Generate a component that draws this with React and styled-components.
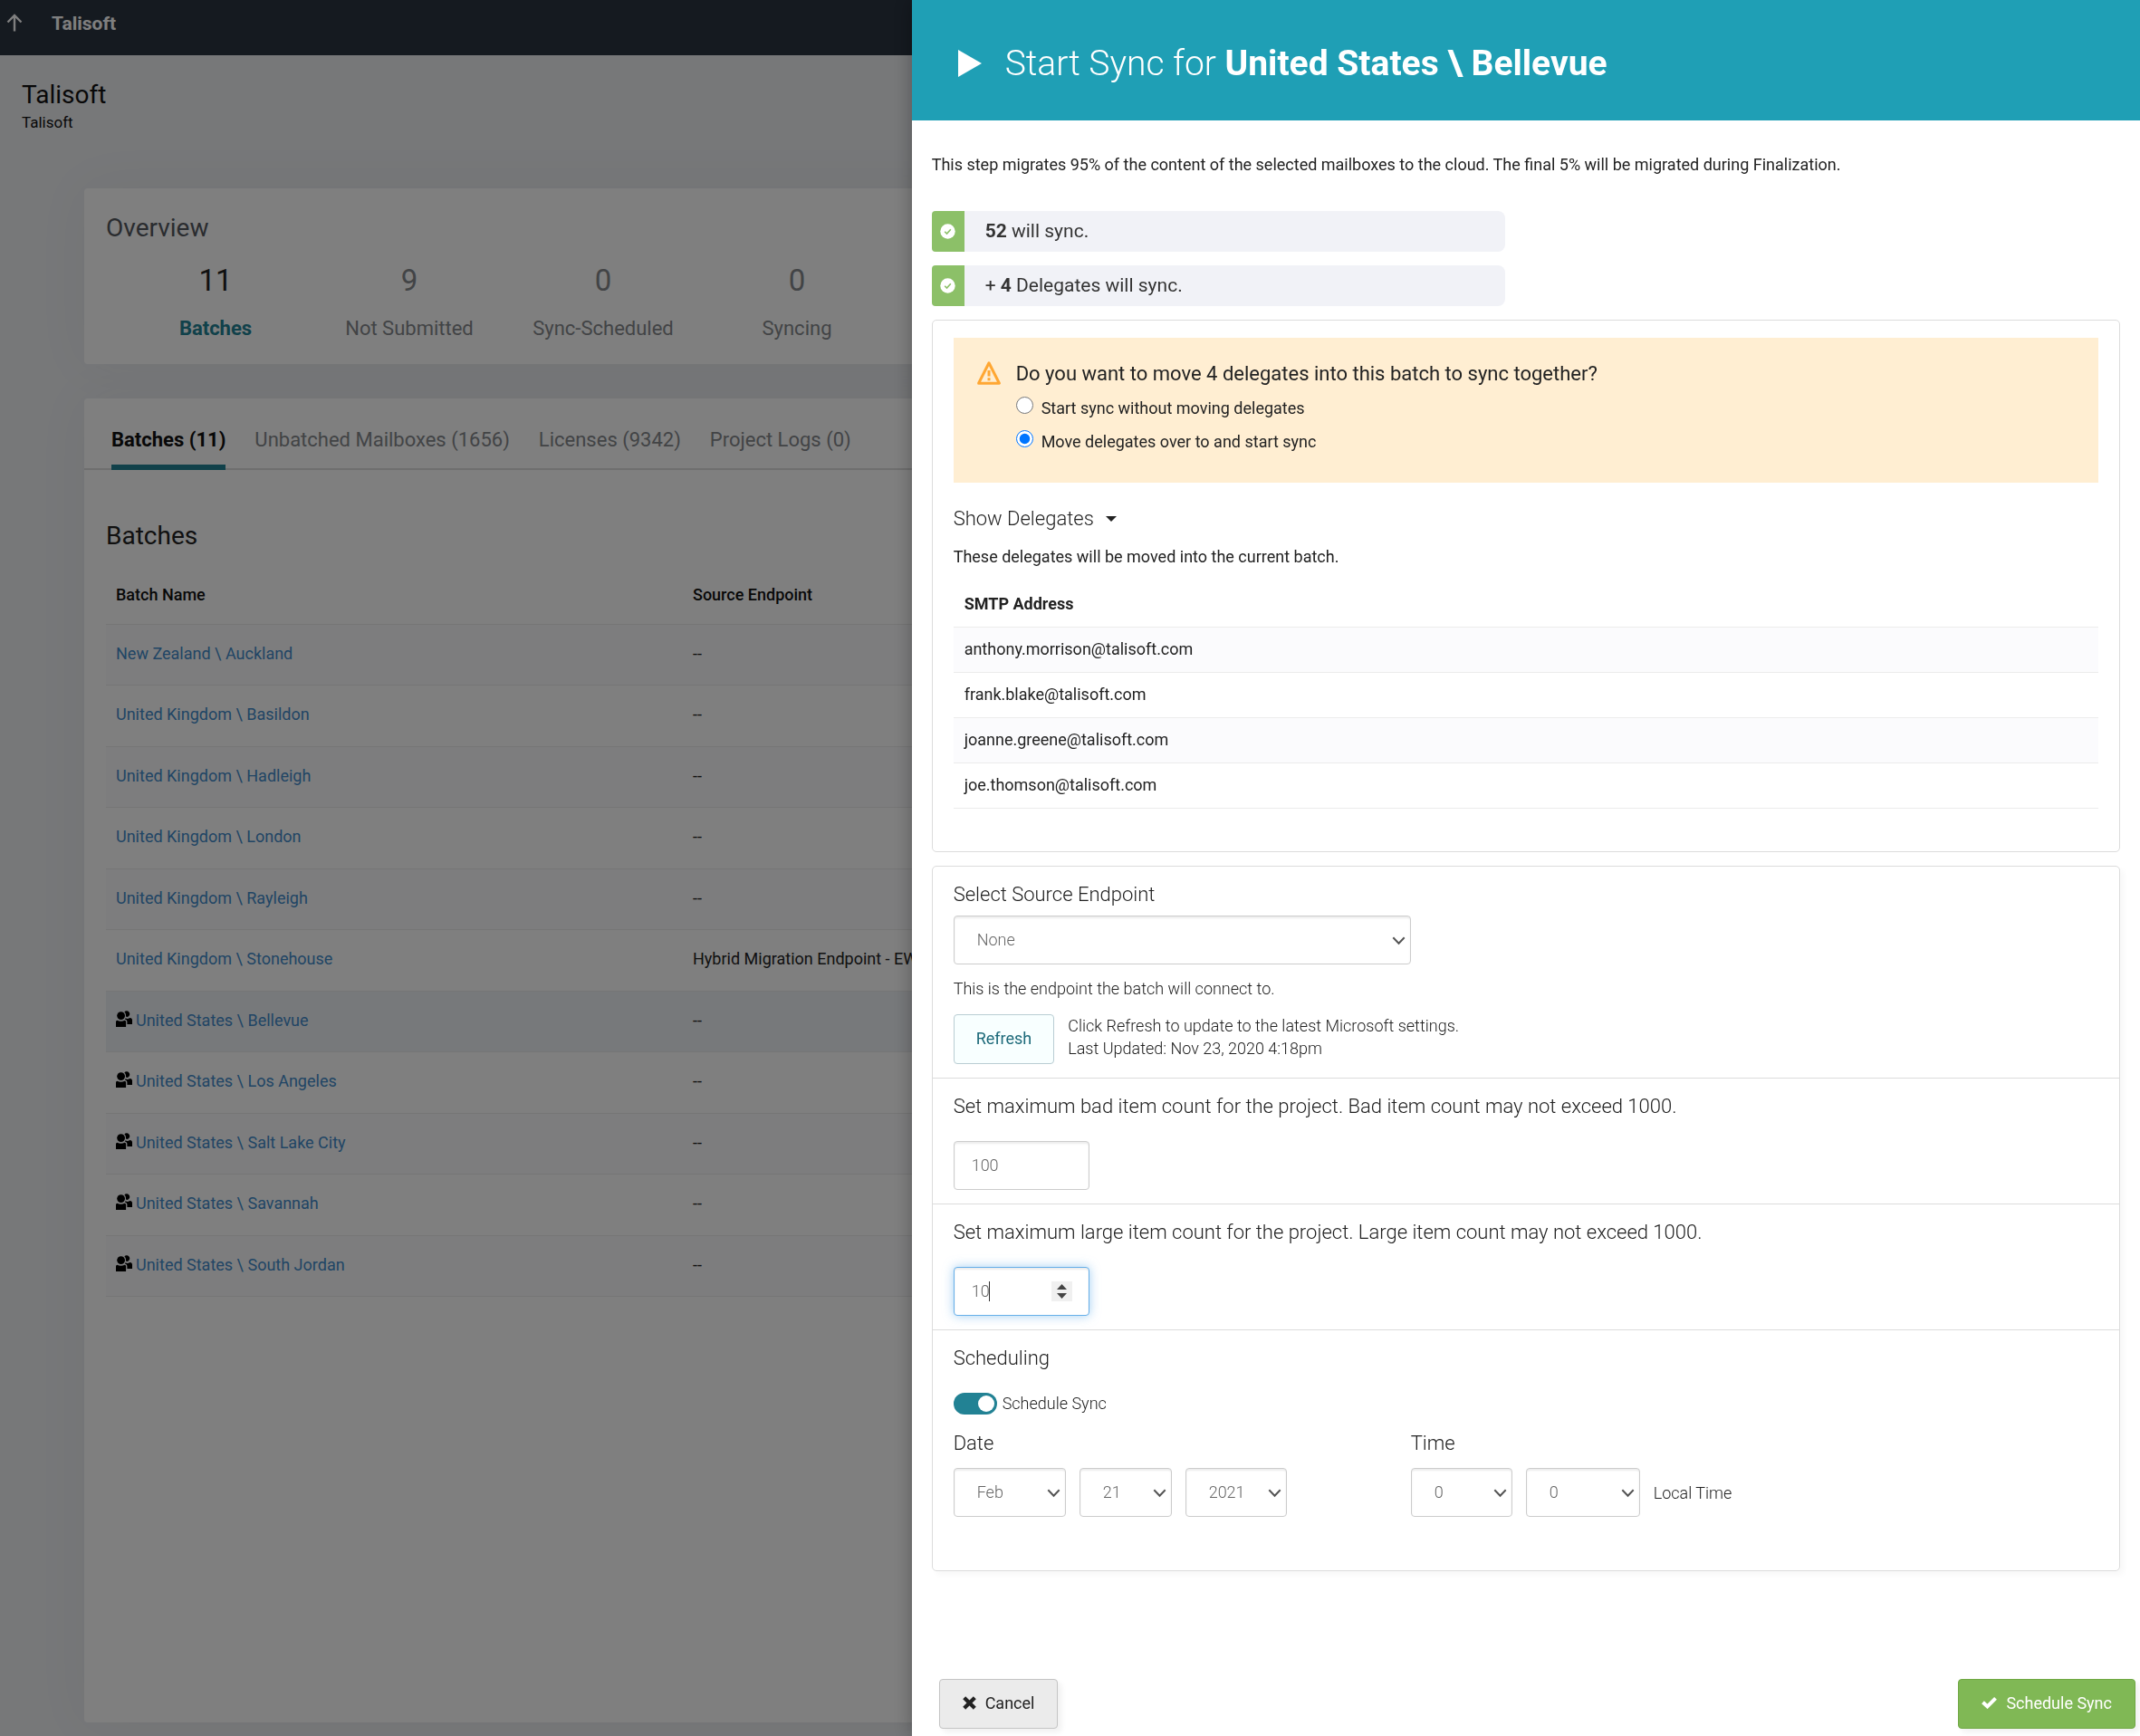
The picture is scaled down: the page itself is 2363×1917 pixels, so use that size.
import React, { useState } from 'react';
import styled, { createGlobalStyle } from 'styled-components';

const GlobalStyle = createGlobalStyle`
  *,
  *::before,
  *::after {
    box-sizing: border-box;
  }

  body {
    margin: 0;
    overflow: hidden;
    background: #eef0f3;
    color: #222;
    font-family: Roboto, 'Liberation Sans', sans-serif;
    font-size: 18px;
    line-height: 25px;
  }

  h1, h2, h3, h4, p, ul {
    margin: 0;
    padding: 0;
    font-weight: inherit;
  }

  button, input, select {
    font: inherit;
    color: inherit;
  }
`;

/* ---------- project page ---------- */

const Page = styled.div`
  display: flex;
  flex-direction: column;
  height: 100vh;
  overflow: hidden;
`;

const TopBar = styled.header`
  display: flex;
  align-items: flex-start;
  gap: 32px;
  flex: none;
  height: 61px;
  padding: 14px 7px;
  background: #2a3440;
  color: #fff;
  font-size: 21px;
  font-weight: 700;

  svg {
    display: block;
    margin-top: 1px;
  }
`;

const PageTitle = styled.div`
  flex: none;
  padding: 26px 24px 60px;
  color: #111;

  h1 {
    font-size: 28px;
    line-height: 36px;
  }

  p {
    font-size: 17px;
  }
`;

const Content = styled.main`
  display: flex;
  flex: 1;
  flex-direction: column;
  gap: 38px;
  padding: 0 25px 15px 93px;
`;

const Card = styled.section`
  flex: ${({ $grow }) => ($grow ? 1 : 'none')};
  padding: ${({ $grow }) => ($grow ? 0 : '26px 24px 24px')};
  border-radius: 4px;
  background: #fff;
  box-shadow: 0 0 60px rgba(50, 60, 80, 0.05);
`;

const CardTitle = styled.h2`
  color: ${({ $muted }) => ($muted ? '#55595f' : '#222')};
  font-size: 28px;
  line-height: 36px;
`;

const Stats = styled.ul`
  display: flex;
  margin-top: 20px;
  padding-left: 14px;
  list-style: none;
`;

const Stat = styled.li`
  width: 214px;
  color: ${({ $active }) => ($active ? '#222' : '#85888c')};
  text-align: center;

  strong {
    display: block;
    font-size: 33px;
    font-weight: 400;
    line-height: 40px;
  }

  span {
    display: block;
    margin-top: 18px;
    color: ${({ $active }) => ($active ? '#228294' : 'inherit')};
    font-size: 22px;
    font-weight: ${({ $active }) => ($active ? 700 : 400)};
    line-height: 30px;
  }
`;

const Tabs = styled.nav`
  display: flex;
  gap: 32px;
  padding: 31px 30px 0;
  box-shadow: inset 0 -2px 0 #dcdcdc;
`;

const Tab = styled.button`
  padding: 0 0 12px;
  border: 0;
  border-bottom: 6px solid ${({ $active }) => ($active ? '#228294' : 'transparent')};
  background: none;
  color: ${({ $active }) => ($active ? '#111' : '#85888c')};
  font-size: 22px;
  font-weight: ${({ $active }) => ($active ? 700 : 400)};
  line-height: 30px;
`;

const BatchPanel = styled.div`
  padding: 55px 24px 24px;
`;

const BatchTable = styled.table`
  width: 100%;
  margin-top: 14px;
  border-collapse: separate;
  border-spacing: 0;
  table-layout: fixed;

  th,
  td {
    padding: 0 11px;
    border-bottom: 1px solid #ececec;
    text-align: left;
    white-space: nowrap;
  }

  td {
    padding-bottom: 4px;
  }

  th {
    height: 66px;
    color: #111;
    font-weight: 500;
  }

  th:first-child {
    width: 637px;
  }

  tbody tr {
    height: 67px;
  }

  tbody tr:nth-child(even) {
    height: 68px;
  }

  tbody tr:nth-child(odd) {
    background: #fbfbfd;
  }

  tbody tr.selected {
    background: #eff2f6;
  }

  a {
    color: #428bca;
    text-decoration: none;
  }

  svg {
    margin-right: 4px;
    vertical-align: -1px;
  }
`;

const Backdrop = styled.div`
  position: fixed;
  inset: 0;
  background: rgba(0, 0, 0, 0.5);
`;

/* ---------- drawer ---------- */

const Drawer = styled.aside`
  position: fixed;
  top: 0;
  right: 0;
  bottom: 0;
  display: flex;
  flex-direction: column;
  width: 57.4%;
  overflow: hidden;
  background: #fff;
  box-shadow: 0 0 20px rgba(0, 0, 0, 0.3);
`;

const DrawerHeader = styled.header`
  display: flex;
  align-items: center;
  gap: 26px;
  flex: none;
  height: 133px;
  padding: 6px 50px 0;
  background: #1f9fb5;
  color: #fff;

  h2 {
    font-size: 39px;
    font-weight: 300;
    line-height: 48px;
  }

  b {
    font-weight: 700;
  }
`;

const DrawerBody = styled.div`
  flex: 1;
  padding: 36px 22px 0;
`;

const Intro = styled.p`
  margin-bottom: 39px;
`;

const Pill = styled.div`
  display: flex;
  align-items: center;
  width: 48.25%;
  height: 45px;
  margin-bottom: 15px;
  overflow: hidden;
  border-radius: 4px 8px 8px 4px;
  background: #f1f2f7;
  color: #333;
  font-size: 21px;
`;

const PillIcon = styled.span`
  display: flex;
  align-items: center;
  justify-content: center;
  width: 36px;
  height: 100%;
  margin-right: 23px;
  background: #8cc068;
`;

const Box = styled.section`
  margin-bottom: 15px;
  border: 1px solid #dcdcdc;
  border-radius: 5px;
  box-shadow: 4px 4px 6px rgba(0, 0, 0, 0.03);
`;

const DelegatesBox = styled(Box)`
  padding: 19px 23px 47px;
  box-shadow: none;
`;

const Alert = styled.fieldset`
  display: flex;
  gap: 17px;
  margin: 0 0 24px;
  padding: 24px 26px 27px;
  border: 0;
  background: #ffeed2;

  > svg {
    flex: none;
    margin-top: 2px;
  }
`;

const Question = styled.div`
  margin-bottom: 3px;
  font-size: 22px;
  line-height: 32px;
`;

const RadioLabel = styled.label`
  display: flex;
  align-items: flex-start;
  gap: 9px;
  line-height: 37px;

  input {
    width: 19px;
    height: 19px;
    margin: 6px 0 0;
  }
`;

const Disclosure = styled.button`
  display: flex;
  align-items: center;
  gap: 13px;
  margin-bottom: 13px;
  padding: 0;
  border: 0;
  background: none;
  font-size: 22px;
  font-weight: 300;
  line-height: 32px;
`;

const DelegateTable = styled.table`
  width: 100%;
  margin-top: 16px;
  border-collapse: separate;
  border-spacing: 0;

  th,
  td {
    height: 50px;
    padding: 0 12px 2px;
    border-bottom: 1px solid #ececec;
    text-align: left;
  }

  th {
    font-weight: 700;
  }

  tbody tr:nth-child(odd) {
    background: #fbfbfd;
  }
`;

const Section = styled.div`
  padding: 15px 23px ${({ $last }) => ($last ? 59 : 15)}px;
  border-bottom: ${({ $last }) => ($last ? 0 : '1px solid #dcdcdc')};
  font-weight: 300;
`;

const SectionTitle = styled.h3`
  display: block;
  font-size: 22px;
  line-height: 32px;
`;

const SelectWrap = styled.div`
  position: relative;
  width: ${({ $width }) => $width};

  select {
    width: 100%;
    height: 54px;
    padding: 0 36px 2px 25px;
    border: 1px solid #ccc;
    border-radius: 4px;
    appearance: none;
    background: #fff;
    box-shadow: inset 0 2px 2px rgba(0, 0, 0, 0.08);
    color: #666;
    font-weight: 300;
  }

  svg {
    position: absolute;
    top: 23px;
    right: 6px;
    pointer-events: none;
  }
`;

const EndpointField = styled.div`
  margin: 7px 0 14px;
`;

const RefreshRow = styled.div`
  display: flex;
  align-items: flex-start;
  gap: 15px;
  margin-top: 16px;
`;

const RefreshButton = styled.button`
  height: 55px;
  padding: 0 24px 2px;
  border: 1px solid #b9cdd3;
  border-radius: 4px;
  background: #f8ffff;
  color: #1d6a7a;
  font-weight: 400;
`;

const NumberField = styled.div`
  position: relative;
  width: 150px;
  margin-top: 22px;

  input {
    display: block;
    width: 100%;
    height: 54px;
    padding: 0 19px 2px;
    border: 1px solid ${({ $focused }) => ($focused ? '#66afe9' : '#ccc')};
    border-radius: 4px;
    outline: 0;
    appearance: textfield;
    box-shadow: inset 0 2px 2px rgba(0, 0, 0, 0.08)
      ${({ $focused }) => $focused && ', 0 0 12px rgba(102, 175, 233, 0.6)'};
    caret-color: ${({ $focused }) => ($focused ? 'transparent' : 'auto')};
    color: #666;
    font-weight: 300;
  }

  input::-webkit-inner-spin-button {
    appearance: none;
    margin: 0;
  }
`;

const Caret = styled.span`
  position: absolute;
  top: 16px;
  left: 39px;
  width: 1px;
  height: 22px;
  background: #333;
`;

const Spinner = styled.svg`
  position: absolute;
  top: 16px;
  right: 19px;
`;

const ToggleLabel = styled.label`
  display: flex;
  gap: 6px;
  margin: 22px 0 16px;
  line-height: 24px;

  input {
    width: 48px;
    height: 24px;
    margin: 0;
    border-radius: 12px;
    appearance: none;
    background: ${({ $on }) => ($on ? '#228294' : '#bbb')};
  }

  input::before {
    content: '';
    display: block;
    width: 18px;
    height: 18px;
    margin: 3px 3px 3px ${({ $on }) => ($on ? 27 : 3)}px;
    border-radius: 50%;
    background: #fff;
  }
`;

const When = styled.div`
  display: grid;
  grid-template-columns: 505px 1fr;
`;

const FieldRow = styled.div`
  display: flex;
  align-items: center;
  gap: 15px;
  margin-top: 11px;
`;

const DrawerFooter = styled.footer`
  display: flex;
  justify-content: space-between;
  flex: none;
  padding: 0 5px 8px 30px;
`;

const ActionButton = styled.button`
  display: flex;
  align-items: center;
  gap: 10px;
  height: 55px;
  padding: 0 25px 2px;
  border: 1px solid ${({ $primary }) => ($primary ? '#6fa843' : '#c4c4c4')};
  border-radius: 4px;
  background: ${({ $primary }) => ($primary ? '#80b855' : '#ebebeb')};
  box-shadow: 4px 4px 6px rgba(0, 0, 0, 0.06);
  color: ${({ $primary }) => ($primary ? '#fff' : '#222')};
`;

/* ---------- icons ---------- */

const ArrowUp = () => (
  <svg width="18" height="20" viewBox="0 0 18 20" fill="none" stroke="#fff" strokeWidth="2.4">
    <path d="M9 19.5V2M1.5 9.5L9 2l7.5 7.5" />
  </svg>
);

const PeopleIcon = () => (
  <svg width="18" height="18" viewBox="0 0 18 18">
    <path d="M9.400 1.300A3.400 3.400 0 1 1 12.600 7C11.900 6.900 11.200 6.600 10.900 6.200A5.600 5.600 0 0 0 9.400 1.300z" />
    <path d="M10.600 8.300c1.400.9 3.700.8 5-.2 1.500.2 2.400 1 2.400 2.400V15h-5.600v-2.600c0-1.400-.8-2.400-2.400-2.800z" />
    <circle cx="5.600" cy="5.600" r="4.400" />
    <path d="M1.500 10.800c2.300 1.300 5.800 1.300 8.100 0 1 .2 1.500.8 1.500 1.800V18H0v-5.400c0-1 .5-1.600 1.500-1.800z" />
  </svg>
);

const PlayIcon = () => (
  <svg width="27" height="30" viewBox="0 0 27 30">
    <path d="M1 0L27 15L1 30z" fill="#fff" />
  </svg>
);

const CheckCircle = () => (
  <svg width="17" height="17" viewBox="0 0 17 17">
    <circle cx="8.5" cy="8.5" r="8.2" fill="#fff" />
    <path d="M5.200 8.800l2.300 2.300 4.300-4.800" fill="none" stroke="#8cc068" strokeWidth="1.6" />
  </svg>
);

const WarningIcon = () => (
  <svg width="26" height="26" viewBox="0 0 26 26" fill="none" stroke="#ffa733" strokeWidth="3" strokeLinejoin="round">
    <path d="M13 1.800L24.400 24.200H1.600z" />
    <path d="M13 10v6.500M13 18.300v3" />
  </svg>
);

const Chevron = () => (
  <svg width="15" height="10" viewBox="0 0 15 10" fill="none" stroke="#555" strokeWidth="2">
    <path d="M1.300 1.300L7.500 7.700l6.200-6.400" />
  </svg>
);

const CrossIcon = () => (
  <svg width="15" height="15" viewBox="0 0 15 15" stroke="#222" strokeWidth="4.2">
    <path d="M1.700 1.700l11.600 11.600M13.300 1.700L1.700 13.300" />
  </svg>
);

const CheckIcon = () => (
  <svg width="17" height="13" viewBox="0 0 17 13" fill="none" stroke="#fff" strokeWidth="4">
    <path d="M1.500 5.700l5 4.700 9-9" />
  </svg>
);

/* ---------- data ---------- */

const stats = [
  ['11', 'Batches'],
  ['9', 'Not Submitted'],
  ['0', 'Sync-Scheduled'],
  ['0', 'Syncing'],
];

const tabs = ['Batches (11)', 'Unbatched Mailboxes (1656)', 'Licenses (9342)', 'Project Logs (0)'];

const batches = [
  { name: 'New Zealand \\ Auckland' },
  { name: 'United Kingdom \\ Basildon' },
  { name: 'United Kingdom \\ Hadleigh' },
  { name: 'United Kingdom \\ London' },
  { name: 'United Kingdom \\ Rayleigh' },
  { name: 'United Kingdom \\ Stonehouse', endpoint: 'Hybrid Migration Endpoint - EWS' },
  { name: 'United States \\ Bellevue', delegates: true, selected: true },
  { name: 'United States \\ Los Angeles', delegates: true },
  { name: 'United States \\ Salt Lake City', delegates: true },
  { name: 'United States \\ Savannah', delegates: true },
  { name: 'United States \\ South Jordan', delegates: true },
];

const delegates = [
  'anthony.morrison@talisoft.com',
  'frank.blake@talisoft.com',
  'joanne.greene@talisoft.com',
  'joe.thomson@talisoft.com',
];

function Select({ label, value, width }) {
  return (
    <SelectWrap $width={width}>
      <select aria-label={label} defaultValue={value}>
        <option>{value}</option>
      </select>
      <Chevron />
    </SelectWrap>
  );
}

function ProjectPage() {
  return (
    <Page>
      <TopBar>
        <ArrowUp />
        <span>Talisoft</span>
      </TopBar>
      <PageTitle>
        <h1>Talisoft</h1>
        <p>Talisoft</p>
      </PageTitle>
      <Content>
        <Card>
          <CardTitle $muted>Overview</CardTitle>
          <Stats>
            {stats.map(([count, label], i) => (
              <Stat key={label} $active={i === 0}>
                <strong>{count}</strong>
                <span>{label}</span>
              </Stat>
            ))}
          </Stats>
        </Card>
        <Card $grow>
          <Tabs>
            {tabs.map((tab, i) => (
              <Tab key={tab} type="button" $active={i === 0}>
                {tab}
              </Tab>
            ))}
          </Tabs>
          <BatchPanel>
            <CardTitle>Batches</CardTitle>
            <BatchTable>
              <thead>
                <tr>
                  <th>Batch Name</th>
                  <th>Source Endpoint</th>
                </tr>
              </thead>
              <tbody>
                {batches.map((batch) => (
                  <tr key={batch.name} className={batch.selected ? 'selected' : undefined}>
                    <td>
                      {batch.delegates && <PeopleIcon />}
                      <a href="#batch">{batch.name}</a>
                    </td>
                    <td>{batch.endpoint || '--'}</td>
                  </tr>
                ))}
              </tbody>
            </BatchTable>
          </BatchPanel>
        </Card>
      </Content>
    </Page>
  );
}

function StartSyncDrawer() {
  const [move, setMove] = useState(true);
  const [open, setOpen] = useState(true);
  const [scheduled, setScheduled] = useState(true);

  return (
    <Drawer>
      <DrawerHeader>
        <PlayIcon />
        <h2>
          Start Sync for <b>United States \ Bellevue</b>
        </h2>
      </DrawerHeader>
      <DrawerBody>
        <Intro>
          This step migrates 95% of the content of the selected mailboxes to the cloud. The final 5% will be migrated
          during Finalization.
        </Intro>
        <Pill>
          <PillIcon>
            <CheckCircle />
          </PillIcon>
          <span>
            <b>52</b> will sync.
          </span>
        </Pill>
        <Pill>
          <PillIcon>
            <CheckCircle />
          </PillIcon>
          <span>
            + <b>4</b> Delegates will sync.
          </span>
        </Pill>

        <DelegatesBox>
          <Alert>
            <WarningIcon />
            <div>
              <Question>Do you want to move 4 delegates into this batch to sync together?</Question>
              <RadioLabel>
                <input type="radio" name="move" checked={!move} onChange={() => setMove(false)} />
                Start sync without moving delegates
              </RadioLabel>
              <RadioLabel>
                <input type="radio" name="move" checked={move} onChange={() => setMove(true)} />
                Move delegates over to and start sync
              </RadioLabel>
            </div>
          </Alert>
          <Disclosure type="button" onClick={() => setOpen(!open)}>
            Show Delegates
            <svg width="12" height="6" viewBox="0 0 12 6">
              <path d="M0 0h12L6 6z" fill="#222" />
            </svg>
          </Disclosure>
          {open && (
            <>
              <p>These delegates will be moved into the current batch.</p>
              <DelegateTable>
                <thead>
                  <tr>
                    <th>SMTP Address</th>
                  </tr>
                </thead>
                <tbody>
                  {delegates.map((address) => (
                    <tr key={address}>
                      <td>{address}</td>
                    </tr>
                  ))}
                </tbody>
              </DelegateTable>
            </>
          )}
        </DelegatesBox>

        <Box>
          <Section>
            <SectionTitle>Select Source Endpoint</SectionTitle>
            <EndpointField>
              <Select label="Source endpoint" value="None" width="40%" />
            </EndpointField>
            <p>This is the endpoint the batch will connect to.</p>
            <RefreshRow>
              <RefreshButton type="button">Refresh</RefreshButton>
              <div>
                Click Refresh to update to the latest Microsoft settings.
                <br />
                Last Updated: Nov 23, 2020 4:18pm
              </div>
            </RefreshRow>
          </Section>
          <Section>
            <SectionTitle as="label" htmlFor="bad-items">
              Set maximum bad item count for the project. Bad item count may not exceed 1000.
            </SectionTitle>
            <NumberField>
              <input id="bad-items" type="number" defaultValue="100" />
            </NumberField>
          </Section>
          <Section>
            <SectionTitle as="label" htmlFor="large-items">
              Set maximum large item count for the project. Large item count may not exceed 1000.
            </SectionTitle>
            <NumberField $focused>
              <input id="large-items" type="number" defaultValue="10" />
              <Caret />
              <Spinner width="23" height="22" viewBox="0 0 23 22">
                <path d="M0 0h23v22H0z" fill="#f0f0f0" />
                <path d="M6 9l5.500-6L17 9zM6 13l5.500 6L17 13z" fill="#444" />
              </Spinner>
            </NumberField>
          </Section>
          <Section $last>
            <SectionTitle>Scheduling</SectionTitle>
            <ToggleLabel $on={scheduled}>
              <input type="checkbox" checked={scheduled} onChange={() => setScheduled(!scheduled)} />
              Schedule Sync
            </ToggleLabel>
            <When>
              <div>
                <SectionTitle>Date</SectionTitle>
                <FieldRow>
                  <Select label="Month" value="Feb" width="124px" />
                  <Select label="Day" value="21" width="102px" />
                  <Select label="Year" value="2021" width="112px" />
                </FieldRow>
              </div>
              <div>
                <SectionTitle>Time</SectionTitle>
                <FieldRow>
                  <Select label="Hour" value="0" width="112px" />
                  <Select label="Minute" value="0" width="126px" />
                  <span>Local Time</span>
                </FieldRow>
              </div>
            </When>
          </Section>
        </Box>
      </DrawerBody>
      <DrawerFooter>
        <ActionButton type="button">
          <CrossIcon />
          Cancel
        </ActionButton>
        <ActionButton type="button" $primary>
          <CheckIcon />
          Schedule Sync
        </ActionButton>
      </DrawerFooter>
    </Drawer>
  );
}

export default function App() {
  return (
    <>
      <GlobalStyle />
      <ProjectPage />
      <Backdrop />
      <StartSyncDrawer />
    </>
  );
}
